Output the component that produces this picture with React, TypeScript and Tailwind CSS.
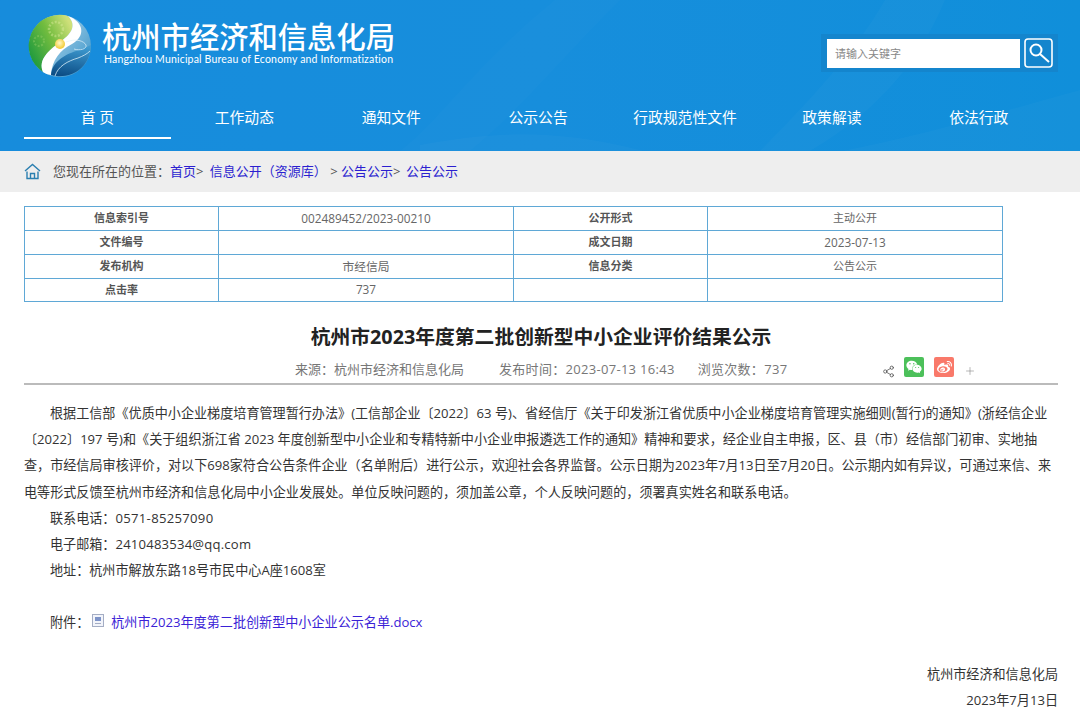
import { Plus, Share2 } from "lucide-react";
import { FaWeibo, FaWeixin } from "react-icons/fa";

const font = "font-['Open_Sans','Noto_Sans_CJK_SC',sans-serif]";

const navItems = ["首 页", "工作动态", "通知文件", "公示公告", "行政规范性文件", "政策解读", "依法行政"];

const rows = [
  ["信息索引号", "002489452/2023-00210", "公开形式", "主动公开"],
  ["文件编号", "", "成文日期", "2023-07-13"],
  ["发布机构", "市经信局", "信息分类", "公告公示"],
  ["点击率", "737", "", ""],
];

const Globe = () => (
  <svg width="64" height="64" viewBox="0 0 64 64" className="shrink-0">
    <defs>
      <linearGradient id="green" x1="0" y1="0.7" x2="0.9" y2="0.1">
        <stop offset="0%" stopColor="#1f9a3e" />
        <stop offset="55%" stopColor="#74bd3f" />
        <stop offset="100%" stopColor="#cfe07a" />
      </linearGradient>
      <linearGradient id="sky" x1="0" y1="0" x2="1" y2="0.8">
        <stop offset="0%" stopColor="#d8edf5" />
        <stop offset="100%" stopColor="#3f97cb" />
      </linearGradient>
      <linearGradient id="deep" x1="0.6" y1="0" x2="0.4" y2="1">
        <stop offset="0%" stopColor="#3f9cd2" />
        <stop offset="100%" stopColor="#0c4d85" />
      </linearGradient>
      <radialGradient id="sun" cx="45%" cy="40%" r="60%">
        <stop offset="0%" stopColor="#fff8c8" />
        <stop offset="100%" stopColor="#f2c92e" />
      </radialGradient>
    </defs>
    <circle cx="32" cy="32" r="31" fill="url(#sky)" />
    <path d="M40 2A31 31 0 0 0 15 58C10 46 20 37 32 28C42 21 50 12 40 2Z" fill="url(#green)" />
    <circle cx="28" cy="15" r="7" fill="none" stroke="#e4efa6" strokeWidth="2.500" strokeDasharray="2 1.500" opacity="0.4" />
    <circle cx="11" cy="27" r="5" fill="none" stroke="#a9d873" strokeWidth="2" strokeDasharray="2 1.500" opacity="0.35" />
    <path d="M40 2C56 8 58 22 44 30C32 36 24 46 23 61C20 60.500 17 59.500 15 58C10 46 20 37 32 28C42 21 50 12 40 2Z" fill="#fff" />
    <path d="M23 61C24 48 36 41 48 37C54 35 59 33 63 31A31 31 0 0 1 23 61Z" fill="url(#deep)" />
    <path d="M27 62C30 52 40 47 50 44C55 42 59 40 62 37" fill="none" stroke="#d8eef8" strokeWidth="0.800" />
    <path d="M38 28C48 24 56 27 58 31C59 35 52 37 46 35" fill="none" stroke="#e4f3fa" strokeWidth="0.700" />
    <circle cx="32" cy="30" r="5" fill="url(#sun)" />
  </svg>
);

const HeaderWaves = () => (
  <svg width="1080" height="151" viewBox="0 0 1080 151" className="absolute inset-0">
    <path d="M760 151C800 110 850 60 885 0H945C920 60 880 110 810 151Z" fill="#fff" opacity="0.025" />
    <path d="M400 151C440 120 480 60 555 0H620C560 60 520 110 470 151Z" fill="#fff" opacity="0.015" />
    <path d="M420 145C500 130 560 130 640 150C760 185 900 140 1080 90V151H420Z" fill="#fff" opacity="0.025" />
  </svg>
);

const HomeIcon = () => (
  <svg width="17" height="17" viewBox="0 0 17 17" fill="none" stroke="#2b7fb0" strokeWidth="1.400">
    <path d="M1 8L8.500 1.500L16 8" />
    <path d="M3 8.500V15.500H14V8.500" />
    <path d="M6.500 15V10.500H10.500V15" />
  </svg>
);

const SearchIcon = () => (
  <svg width="29" height="30" viewBox="0 0 29 30" fill="none" stroke="#fff">
    <rect x="1" y="1" width="27" height="28" rx="3" strokeWidth="1.600" />
    <circle cx="12" cy="12" r="5.500" strokeWidth="2" />
    <path d="M16 16L25 24" strokeWidth="2" />
  </svg>
);

const DocIcon = () => (
  <svg width="12" height="13" viewBox="0 0 12 13" className="block">
    <rect x="0.500" y="0.500" width="11" height="12" fill="#f2f4fa" stroke="#a4adc4" />
    <rect x="3" y="3" width="6" height="4" fill="#7d93c8" />
    <path d="M3 9.500H9" stroke="#a4adc4" />
  </svg>
);

export default function App() {
  return (
    <div className={`${font} bg-white w-[1080px] h-[718px] overflow-hidden`}>
      <header className="relative h-[151px] bg-gradient-to-r from-[#178cdc] via-[#178edc] to-[#108fda]">
        <HeaderWaves />
        <div className="relative flex justify-between h-[100px] pl-[28px] pr-[22px]">
          <div className="flex items-start pt-[14px]">
            <Globe />
            <div className="ml-[10px] text-white">
              <div className="text-[29.300px] leading-[30px] mt-[8px] font-medium whitespace-nowrap">杭州市经济和信息化局</div>
              <div className="text-[10.500px] leading-[12px] mt-[1px] ml-[2px] font-['Lato',sans-serif] whitespace-nowrap tracking-[0.180px]">
                Hangzhou Municipal Bureau of Economy and Informatization
              </div>
            </div>
          </div>
          <div className="flex items-center gap-[4px] self-start mt-[34px] h-[38px] pl-[6px] pr-[5px] bg-[#1485cd]">
            <div className="w-[193px] h-[29px] bg-white text-[#888] text-[11px] leading-[29px] pl-[8px]">请输入关键字</div>
            <SearchIcon />
          </div>
        </div>
        <nav className="relative flex pl-[24px]">
          {navItems.map((item, i) => (
            <div
              key={item}
              className={`w-[146.900px] h-[39px] text-center text-white text-[14.800px] leading-[34px] ${i === 0 ? "border-b-2 border-white" : ""}`}
            >
              {item}
            </div>
          ))}
        </nav>
      </header>

      <div className="h-[41px] bg-[#eeeeee] flex items-center pl-[24px] text-[13px] text-[#555]">
        <HomeIcon />
        <span className="ml-[12px]">您现在所在的位置：</span>
        <span className="text-[#2b1fd0]">首页</span>
        <span className="mr-[3px]">&gt;&nbsp;</span>
        <span className="text-[#2b1fd0]">信息公开（资源库）</span>
        <span>&nbsp;&gt;&nbsp;</span>
        <span className="text-[#2b1fd0]">公告公示</span>
        <span className="mr-[2px]">&gt;&nbsp;</span>
        <span className="text-[#2b1fd0]">公告公示</span>
      </div>

      <div className="px-[24px]">
        <table className="mt-[14px] w-[979px] table-fixed border-collapse text-[11px] text-[#666]">
          <colgroup>
            <col className="w-[194px]" />
            <col className="w-[295px]" />
            <col className="w-[194px]" />
            <col className="w-[295px]" />
          </colgroup>
          <tbody>
            {rows.map((r, i) => (
              <tr key={i} className={i === 3 ? "h-[23px]" : "h-[24px]"}>
                <td className="border border-[#5fa8d6] text-center p-0 font-semibold text-[#555]">{r[0]}</td>
                <td className="border border-[#5fa8d6] text-center p-0 [&>span]:text-[11.800px]"><span>{r[1]}</span></td>
                <td className="border border-[#5fa8d6] text-center p-0 font-semibold text-[#555]">{r[2]}</td>
                <td className="border border-[#5fa8d6] text-center p-0">
                  {i === 1 ? <span className="text-[11.800px]">{r[3]}</span> : r[3]}
                </td>
              </tr>
            ))}
          </tbody>
        </table>

        <h1 className="mt-[20px] text-center text-[19.800px] leading-[30px] font-bold text-[#222] w-[1034px]">
          杭州市2023年度第二批创新型中小企业评价结果公示
        </h1>

        <div className="relative mt-[4px] h-[29px] w-[1034px] border-b-2 border-[#bbbbbb] text-[13px] text-[#777] leading-[26px]">
          <div className="flex pl-[271px]">
            <span>来源：杭州市经济和信息化局</span>
            <span className="ml-[35px] tracking-[0.300px]">发布时间：2023-07-13 16:43</span>
            <span className="ml-[23px] tracking-[0.300px]">浏览次数：737</span>
          </div>
          <div className="absolute left-[858px] top-[0px] flex items-end h-[26px]">
            <Share2 size={13} strokeWidth={1.500} color="#555" className="mb-[4px]" />
            <span className="ml-[9px] mb-[5px] w-[20px] h-[20px] rounded-[2px] bg-[#4cc05a] flex items-center justify-center">
              <FaWeixin size={16} color="#fff" />
            </span>
            <span className="ml-[10px] mb-[5px] w-[20px] h-[20px] rounded-[2px] bg-[#f9796a] flex items-center justify-center">
              <FaWeibo size={15} color="#fff" />
            </span>
            <Plus size={12} strokeWidth={1.200} color="#888" className="ml-[10px] mb-[5px]" />
          </div>
        </div>

        <div className="mt-[15px] w-[1034px] text-[13.100px] leading-[26.200px] text-[#333]">
          <p className="indent-[26px]">
            根据工信部《优质中小企业梯度培育管理暂行办法》(工信部企业〔2022〕63 号)、省经信厅《关于印发浙江省优质中小企业梯度培育管理实施细则(暂行)的通知》(浙经信企业〔2022〕197 号)和《关于组织浙江省 2023 年度创新型中小企业和专精特新中小企业申报遴选工作的通知》精神和要求，经企业自主申报，区、县（市）经信部门初审、实地抽查，市经信局审核评价，对以下698家符合公告条件企业（名单附后）进行公示，欢迎社会各界监督。公示日期为2023年7月13日至7月20日。公示期内如有异议，可通过来信、来电等形式反馈至杭州市经济和信息化局中小企业发展处。单位反映问题的，须加盖公章，个人反映问题的，须署真实姓名和联系电话。
          </p>
          <p className="indent-[26px]">联系电话：<span className="tracking-[0.300px]">0571-85257090</span></p>
          <p className="indent-[26px]">电子邮箱：<span className="tracking-[0.200px]">2410483534@qq.com</span></p>
          <p className="indent-[26px]">地址：杭州市解放东路18号市民中心A座1608室</p>
          <p className="mt-[26px] pl-[26px] flex items-center">
            <span>附件：</span>
            <span className="ml-[3px] mr-[7px] mb-[4px]"><DocIcon /></span>
            <span className="text-[#3a22d6]">杭州市2023年度第二批创新型中小企业公示名单.docx</span>
          </p>
          <p className="mt-[25px] text-right">杭州市经济和信息化局</p>
          <p className="text-right">2023年7月13日</p>
        </div>
      </div>
    </div>
  );
}
